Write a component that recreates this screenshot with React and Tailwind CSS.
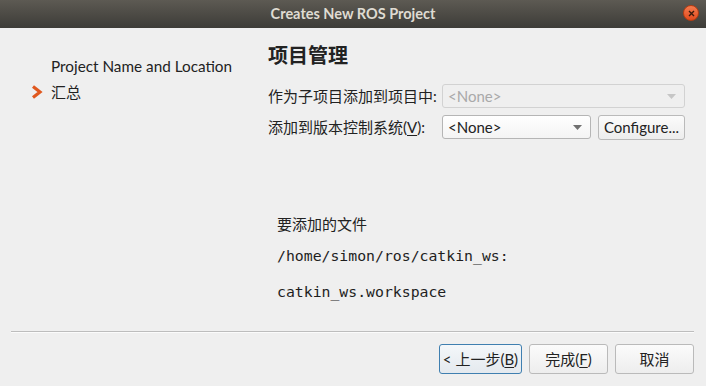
import React from 'react';

const font = "font-[Lato,'Noto_Sans_CJK_SC',sans-serif]";

function Arrow() {
  return (
    <svg width="12" height="14" viewBox="0 0 12 14">
      <polyline points="2,1.5 9,7 2,12.5" fill="none" stroke="#e0581f" strokeWidth="3.2" strokeLinejoin="miter" />
    </svg>
  );
}

function Caret({ color }) {
  return (
    <svg width="9" height="5" viewBox="0 0 9 5">
      <polygon points="0,0 9,0 4.5,5" fill={color} />
    </svg>
  );
}

function Combo({ text, disabled, className }) {
  return (
    <div
      className={
        'flex h-[24px] items-center justify-between rounded-[3px] border pl-[5px] pr-[8px] ' +
        (disabled
          ? 'border-[#d2d2d2] bg-[#efefef] text-[#a9a9a9] '
          : 'border-[#b5b5b5] bg-gradient-to-b from-[#ffffff] to-[#f4f4f4] text-[#222] ') +
        className
      }
    >
      <span>{text}</span>
      <Caret color={disabled ? '#c6c6c6' : '#707070'} />
    </div>
  );
}

function Button({ children, focused, small, className }) {
  return (
    <div
      className={
        'flex items-center justify-center rounded-[3px] border bg-gradient-to-b ' +
        (small ? 'h-[25px] ' : 'h-[30px] ') +
        (focused
          ? 'border-[#3f7fb0] from-[#f4f7fa] to-[#e4e9ee] '
          : 'border-[#bababa] from-[#fbfbfb] to-[#ededed] ') +
        className
      }
    >
      {children}
    </div>
  );
}

export default function App() {
  return (
    <div className={`w-[706px] h-[386px] flex flex-col bg-[#efefef] text-[15px] text-[#222] ${font}`}>
      {/* title bar */}
      <div className="relative h-[28px] flex items-center justify-center bg-gradient-to-b from-[#5d5a53] to-[#3d3c38]">
        <span className="font-bold text-[14.5px] text-[#dfdbd2]">Creates New ROS Project</span>
        <div className="absolute left-[683px] top-[5px] w-[16px] h-[16px] rounded-full border border-[#b83c12] bg-gradient-to-b from-[#f47b4e] to-[#e0491a] flex items-center justify-center">
          <svg width="7" height="7" viewBox="0 0 7 7">
            <path d="M1 1L6 6M6 1L1 6" stroke="#3a1a0c" strokeWidth="1.4" />
          </svg>
        </div>
      </div>

      {/* body */}
      <div className="flex h-[303px]">
        <div className="w-[268px] pt-[28px] flex flex-col gap-[6px]">
          <div className="flex items-center h-[20px]">
            <span className="w-[51px]" />
            <span className="text-[15.3px]">Project Name and Location</span>
          </div>
          <div className="flex items-center h-[20px]">
            <span className="w-[51px] pl-[31px] flex items-center">
              <Arrow />
            </span>
            <span>汇总</span>
          </div>
        </div>

        <div className="flex-1 pt-[13px] pr-[21px] flex flex-col">
          <div className="h-[28px] leading-[28px] text-[20px] font-bold text-[#222]">项目管理</div>

          <div className="mt-[15px] grid grid-cols-[174px_1fr] gap-y-[7px] items-center">
            <span>作为子项目添加到项目中:</span>
            <Combo text="<None>" disabled className="" />
            <span>
              添加到版本控制系统(<span className="underline underline-offset-2">V</span>):
            </span>
            <div className="flex gap-[7px]">
              <Combo text="<None>" className="w-[149px]" />
              <Button small className="flex-1">Configure...</Button>
            </div>
          </div>

          <div className="mt-[74px] pl-[9px] flex flex-col">
            <div className="h-[20px] leading-[20px]">要添加的文件</div>
            <div className="mt-[12px] h-[20px] leading-[20px] font-['DejaVu_Sans_Mono',monospace] text-[14.8px] text-[#1e1e1e]">
              /home/simon/ros/catkin_ws:
            </div>
            <div className="mt-[16px] h-[20px] leading-[20px] font-['DejaVu_Sans_Mono',monospace] text-[14.8px] text-[#1e1e1e]">
              catkin_ws.workspace
            </div>
          </div>
        </div>
      </div>

      {/* separator */}
      <div className="mx-[11px] mr-[12px] border-t border-[#bdbdbd] border-b border-b-[#fbfbfb]" />

      {/* footer */}
      <div className="flex justify-end gap-[7px] pt-[11px] pr-[12px]">
        <Button focused className="w-[83px]">
          &lt; 上一步(<span className="underline underline-offset-2">B</span>)
        </Button>
        <Button className="w-[79px]">
          完成(<span className="underline underline-offset-2">F</span>)
        </Button>
        <Button className="w-[79px]">取消</Button>
      </div>
    </div>
  );
}
